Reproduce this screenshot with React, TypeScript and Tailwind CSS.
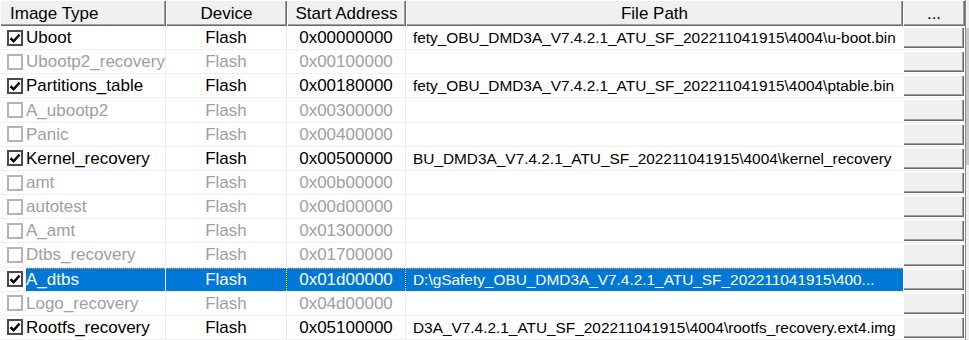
import React from "react";

type Row = {
  name: string;
  addr: string;
  path?: string;
  checked: boolean;
  selected?: boolean;
};

const rows: Row[] = [
  { name: "Uboot", addr: "0x00000000", checked: true, path: "fety_OBU_DMD3A_V7.4.2.1_ATU_SF_202211041915\\4004\\u-boot.bin" },
  { name: "Ubootp2_recovery", addr: "0x00100000", checked: false },
  { name: "Partitions_table", addr: "0x00180000", checked: true, path: "fety_OBU_DMD3A_V7.4.2.1_ATU_SF_202211041915\\4004\\ptable.bin" },
  { name: "A_ubootp2", addr: "0x00300000", checked: false },
  { name: "Panic", addr: "0x00400000", checked: false },
  { name: "Kernel_recovery", addr: "0x00500000", checked: true, path: "BU_DMD3A_V7.4.2.1_ATU_SF_202211041915\\4004\\kernel_recovery" },
  { name: "amt", addr: "0x00b00000", checked: false },
  { name: "autotest", addr: "0x00d00000", checked: false },
  { name: "A_amt", addr: "0x01300000", checked: false },
  { name: "Dtbs_recovery", addr: "0x01700000", checked: false },
  { name: "A_dtbs", addr: "0x01d00000", checked: true, selected: true, path: "D:\\gSafety_OBU_DMD3A_V7.4.2.1_ATU_SF_202211041915\\400..." },
  { name: "Logo_recovery", addr: "0x04d00000", checked: false },
  { name: "Rootfs_recovery", addr: "0x05100000", checked: true, path: "D3A_V7.4.2.1_ATU_SF_202211041915\\4004\\rootfs_recovery.ext4.img" },
];

const headBevel =
  "bg-[#f0f0f0] shadow-[inset_1px_1px_0_#ffffff,inset_-1px_-1px_0_#696969,inset_-2px_-2px_0_#a0a0a0]";

function CheckBox({ checked }: { checked: boolean }) {
  return (
    <span
      className={
        checked
          ? "flex h-[16px] w-[16px] shrink-0 items-center justify-center border-2 border-[#4a4a4a] bg-white"
          : "flex h-[16px] w-[16px] shrink-0 items-center justify-center border-2 border-[#b4b4b4] bg-white"
      }
    >
      {checked && (
        <svg viewBox="0 0 12 12" className="h-[12px] w-[12px]">
          <path d="M1.5 6.2 L4.6 9.3 L10.5 2.6" fill="none" stroke="#000" strokeWidth="2.4" />
        </svg>
      )}
    </span>
  );
}

function TableRow({ row }: { row: Row }) {
  const txt = row.selected ? "text-white" : row.checked ? "text-black" : "text-[#a0a0a0]";
  const cellBg = row.selected ? "bg-[#0078d7]" : "bg-white";
  const focus = row.selected ? "border-t border-dotted border-t-[#f0a030]" : "";
  return (
    <div className="flex h-[24.5px] border-b border-[#f0f0f0]">
      <div className="flex w-[166px] shrink-0 items-center border-r border-[#ececec] pl-[7px]">
        <CheckBox checked={row.checked} />
        <span className={`ml-[3px] flex h-full flex-1 items-center ${cellBg} ${txt} ${focus}`}>
          {row.name}
        </span>
      </div>
      <div className={`flex w-[121px] shrink-0 items-center justify-center border-r border-[#ececec] ${cellBg} ${txt} ${focus}`}>
        Flash
      </div>
      <div className={`flex w-[119px] shrink-0 items-center justify-center border-r border-[#ececec] ${cellBg} ${txt} ${focus}`}>
        {row.addr}
      </div>
      <div className={`flex w-[497px] shrink-0 items-center overflow-hidden whitespace-nowrap pl-[7px] text-[15.4px] ${cellBg} ${txt} ${focus}`}>
        {row.path ?? ""}
      </div>
      <div className="flex w-[62px] shrink-0 items-stretch py-[1px] pr-[1px]">
        <div className="flex-1 bg-[#f0f0f0] shadow-[inset_1px_1px_0_#ffffff,inset_-1px_-1px_0_#696969,inset_-2px_-2px_0_#a0a0a0]" />
      </div>
    </div>
  );
}

export default function App() {
  return (
    <div
      className="flex h-[340px] w-[969px] overflow-hidden bg-white text-[17px] leading-none"
      style={{ fontFamily: '"Liberation Sans", Arial, sans-serif' }}
    >
      <div className="flex w-[965px] shrink-0 flex-col">
        <div className="flex h-[26px] shrink-0 text-black">
          <div className={`flex w-[166px] items-center pl-[10px] ${headBevel}`}>Image Type</div>
          <div className={`flex w-[121px] items-center justify-center ${headBevel}`}>Device</div>
          <div className={`flex w-[119px] items-center justify-center ${headBevel}`}>Start Address</div>
          <div className={`flex w-[497px] items-center justify-center ${headBevel}`}>File Path</div>
          <div className={`flex w-[62px] items-center justify-center ${headBevel}`}>...</div>
        </div>
        {rows.map((r) => (
          <TableRow key={r.name} row={r} />
        ))}
      </div>
      <div className="flex w-[4px] shrink-0 flex-col border-l border-[#8a8a8a] bg-[#f0f0f0] pt-[28px]">
        <div className="h-[137px] bg-[#c8c8c8]" />
      </div>
    </div>
  );
}
